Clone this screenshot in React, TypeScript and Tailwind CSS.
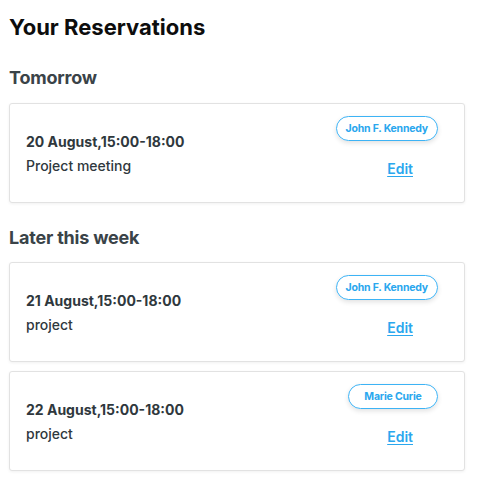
import React from "react";

type R = { date: string; title: string; person: string };

function Card({ r }: { r: R }) {
  return (
    <div className="flex h-[100px] items-start justify-between rounded-[3px] border border-[#e2e2e2] bg-white shadow-[0_1px_3px_rgba(0,0,0,0.06)]">
      <div className="flex h-full flex-col justify-center pl-[16px] pt-[2px]">
        <div className="text-[14px] font-bold leading-[24px] text-[#2f383d]">{r.date}</div>
        <div className="text-[14px] font-medium leading-[24px] text-[#2f383d]">{r.title}</div>
      </div>
      <div className="flex flex-col items-end pr-[26px] pt-[12px]">
        <span className="min-w-[90px] rounded-full border border-[#3db3f5] px-[9px] text-center text-[10.5px] font-bold leading-[23px] tracking-[-0.2px] text-[#2aa7ee] shadow-[0_2px_5px_rgba(0,0,0,0.12)]">
          {r.person}
        </span>
        <a className="mr-[25px] mt-[18px] text-[14px] font-semibold leading-[20px] text-[#2aa7ee] underline underline-offset-2">
          Edit
        </a>
      </div>
    </div>
  );
}

export default function App() {
  return (
    <div className="min-h-[494px] bg-white pl-[9px] pr-[14px] pt-[12px] font-['Inter',sans-serif]">
      <h1 className="text-[22px] font-bold leading-[30px] text-[#0d0d0d]">Your Reservations</h1>
      <h2 className="mt-[24px] text-[18px] font-bold leading-[24px] tracking-[-0.2px] text-[#3a4348]">Tomorrow</h2>
      <div className="mt-[13px]">
        <Card r={{ date: "20 August,15:00-18:00", title: "Project meeting", person: "John F. Kennedy" }} />
      </div>
      <h2 className="mt-[23px] text-[18px] font-bold leading-[24px] tracking-[-0.2px] text-[#3a4348]">Later this week</h2>
      <div className="mt-[12px] flex flex-col gap-[9px]">
        <Card r={{ date: "21 August,15:00-18:00", title: "project", person: "John F. Kennedy" }} />
        <Card r={{ date: "22 August,15:00-18:00", title: "project", person: "Marie Curie" }} />
      </div>
    </div>
  );
}
